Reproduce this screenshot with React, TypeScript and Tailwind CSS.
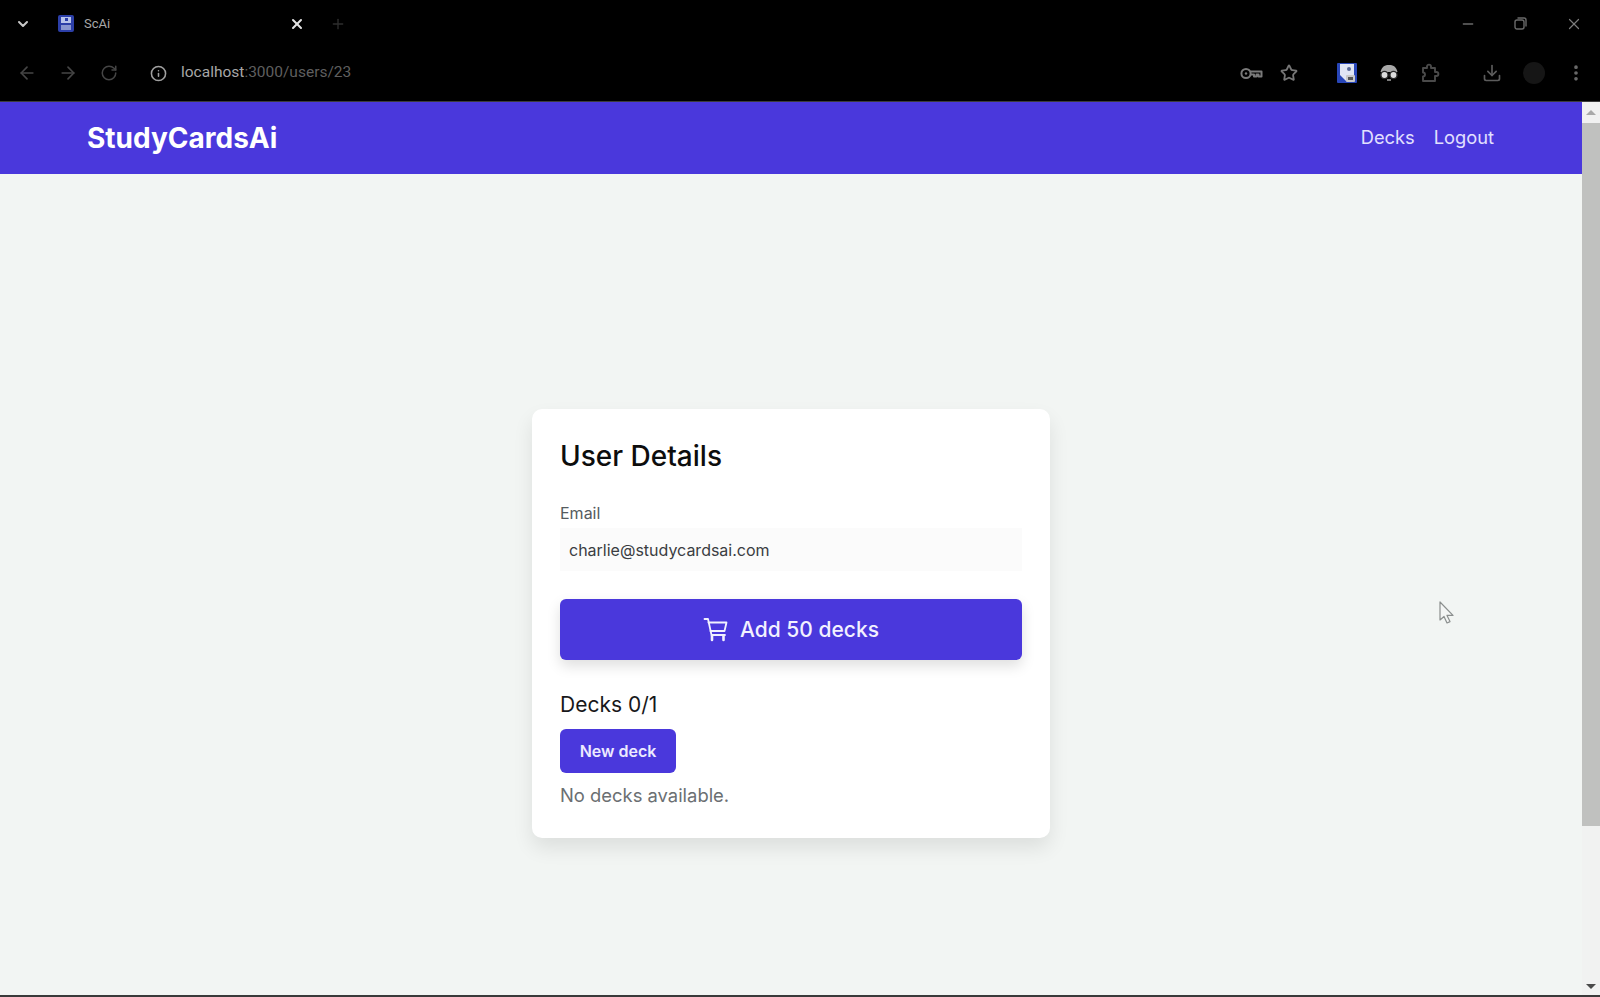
import {
  ArrowLeft,
  ArrowRight,
  ChevronDown,
  Download,
  EllipsisVertical,
  Info,
  Minus,
  Plus,
  RotateCw,
  Star,
  X,
} from "lucide-react"

const KeyIcon = () => (
  <svg width="23" height="13" viewBox="0 0 23 13" fill="none" stroke="#7a7a7a" strokeWidth="2">
    <circle cx="6" cy="6.5" r="4.6" />
    <circle cx="6" cy="6.5" r="1.2" fill="#7a7a7a" stroke="none" />
    <path d="M10.5 4.5h11v5h-3v-2h-2v2h-2.5v-2h-3.5" strokeLinejoin="round" />
  </svg>
)

const PuzzleIcon = () => (
  <svg width="20" height="20" viewBox="0 0 20 20" fill="none" stroke="#4a4a4a" strokeWidth="1.9" strokeLinejoin="round">
    <path d="M3 5h4V3.6a2 2 0 0 1 4 0V5h4v4h1.4a2 2 0 0 1 0 4H15v5H3v-4.5a2 2 0 0 0 0-4z" />
  </svg>
)

const RestoreIcon = () => (
  <svg width="13" height="13" viewBox="0 0 13 13" fill="none" stroke="#6a6a6a" strokeWidth="1.4">
    <rect x="1" y="3" width="9" height="9" rx="2" />
    <path d="M3.5 1h6.5a2 2 0 0 1 2 2v6.5" />
  </svg>
)

const Favicon = () => (
  <svg width="16" height="17" viewBox="0 0 16 17">
    <rect width="16" height="17" rx="2" fill="#2c3fa8" />
    <rect x="3" y="2" width="10" height="6" fill="#b9c4ea" />
    <rect x="7" y="3" width="3" height="3" fill="#2c3fa8" />
    <rect x="3" y="10" width="10" height="5" fill="#8a97d0" />
  </svg>
)

const BitwardenIcon = () => (
  <svg width="20" height="20" viewBox="0 0 20 20">
    <rect width="20" height="20" rx="1" fill="#2846b8" />
    <path d="M3 1h14v17H9L3 12z" fill="#e0e5f4" />
    <circle cx="12" cy="6" r="2" fill="#5a6a9a" />
    <rect x="9" y="12" width="9" height="7" rx="1" fill="#c9c9c9" />
    <rect x="11" y="14" width="5" height="3" fill="#555" />
  </svg>
)

const IncognitoIcon = () => (
  <svg width="20" height="18" viewBox="0 0 20 18">
    <path d="M1.500 8C3 2 6 1 10 1s7 1 8.500 7z" fill="#a8a8a8" />
    <circle cx="5.500" cy="11" r="3.600" fill="#dcdcdc" stroke="#2a2a2a" strokeWidth="1.400" />
    <circle cx="14.500" cy="11" r="3.600" fill="#dcdcdc" stroke="#2a2a2a" strokeWidth="1.400" />
    <path d="M8 16h4" stroke="#9a9a9a" strokeWidth="1.600" />
  </svg>
)

const CartIcon = () => (
  <svg width="26" height="26" viewBox="0 0 26 26" fill="none" stroke="currentColor" strokeWidth="1.800" strokeLinejoin="round" strokeLinecap="round">
    <path d="M1.500 2h3.500l3.500 16h13.500" />
    <path d="M5.500 5.500h18l-2 8.500H7.500" />
    <path d="M9 18.500v4.500M20.500 18.500v4.500" strokeWidth="2.600" />
  </svg>
)

const CursorIcon = () => (
  <svg width="18" height="24" viewBox="0 0 18 24" fill="#f4f6f5" stroke="#8b8f8e" strokeWidth="1.200" strokeLinejoin="round">
    <path d="M1 1v18l4-3.500 3 6.500 3-1.400-3-6.200 6 0z" />
  </svg>
)

const Slot = ({ className, children }: { className?: string; children: React.ReactNode }) => (
  <div className={`flex h-full items-center justify-center ${className ?? "w-[41px]"}`}>{children}</div>
)

const BrowserChrome = () => (
  <header className="h-[102px] shrink-0 border-b border-[#3c3c3c] bg-black">
    <div className="flex h-[47px] items-center">
      <div className="flex w-[46px] justify-center">
        <ChevronDown className="h-4 w-4 text-[#c8c8c8]" strokeWidth={3} />
      </div>
      <div className="ml-[12px]">
        <Favicon />
      </div>
      <span className="ml-[10px] text-[13px] text-[#a8a8a8] [font-family:Roboto,sans-serif]">ScAi</span>
      <div className="ml-[179px] flex w-[16px] justify-center">
        <X className="h-4 w-4 text-[#e4e4e4]" strokeWidth={3} />
      </div>
      <div className="ml-[25px] flex w-[16px] justify-center">
        <Plus className="h-4 w-4 text-[#2e2e2e]" strokeWidth={2} />
      </div>
      <div className="ml-auto flex items-center">
        <div className="flex w-[53px] justify-center">
          <Minus className="h-4 w-4 text-[#6a6a6a]" />
        </div>
        <div className="flex w-[53px] justify-center">
          <RestoreIcon />
        </div>
        <div className="flex w-[53px] justify-center">
          <X className="h-[18px] w-[18px] text-[#7c7c7c]" strokeWidth={1.6} />
        </div>
      </div>
    </div>
    <div className="flex h-[52px] items-center pl-[6px] pr-[4px]">
      <Slot>
        <ArrowLeft className="h-5 w-5 text-[#454545]" />
      </Slot>
      <Slot>
        <ArrowRight className="h-5 w-5 text-[#454545]" />
      </Slot>
      <Slot>
        <RotateCw className="h-[18px] w-[18px] text-[#454545]" />
      </Slot>
      <Info className="ml-[21px] h-[17px] w-[17px] text-[#a0a0a0]" strokeWidth={2.2} />
      <div className="ml-[14px] text-[15.5px] [font-family:Roboto,sans-serif]">
        <span className="text-[#a8a8a8]">localhost</span>
        <span className="text-[#5f5f5f]">:3000/users/23</span>
      </div>
      <div className="ml-auto flex h-full items-center">
        <div className="mr-[8px] flex w-[30px] justify-center">
          <KeyIcon />
        </div>
        <div className="mr-[22px] flex w-[30px] justify-center">
          <Star className="h-[18px] w-[18px] text-[#767676]" strokeWidth={2.4} />
        </div>
        <Slot className="w-[42px]">
          <BitwardenIcon />
        </Slot>
        <Slot className="w-[41px]">
          <IncognitoIcon />
        </Slot>
        <Slot className="w-[41px]">
          <PuzzleIcon />
        </Slot>
        <div className="w-[21px]" />
        <Slot className="w-[42px]">
          <Download className="h-5 w-5 text-[#5c5c5c]" strokeWidth={2} />
        </Slot>
        <Slot className="w-[42px]">
          <div className="h-[22px] w-[22px] rounded-full bg-[#161616]" />
        </Slot>
        <Slot className="w-[41px]">
          <EllipsisVertical className="h-5 w-5 text-[#6a6a6a]" strokeWidth={2.4} />
        </Slot>
      </div>
    </div>
  </header>
)

const Scrollbar = () => (
  <div className="flex w-[18px] shrink-0 flex-col bg-[#f1f2f1]">
    <div className="flex h-[21px] items-center justify-center bg-[#f1f1f1]">
      <div className="h-0 w-0 border-x-[5px] border-b-[5px] border-x-transparent border-b-[#a9a9a9]" />
    </div>
    <div className="h-[703px] bg-[#c0c1bf]" />
    <div className="flex-1" />
    <div className="flex h-[17px] items-center justify-center">
      <div className="h-0 w-0 border-x-[5px] border-t-[5px] border-x-transparent border-t-[#4a4a4a]" />
    </div>
  </div>
)

export default function App() {
  return (
    <div className="relative flex h-[997px] w-full flex-col overflow-hidden bg-[#f2f5f3] [font-family:Inter,sans-serif]">
      <BrowserChrome />
      <div className="flex min-h-0 flex-1">
        <div className="flex min-w-0 flex-1 flex-col">
          <nav className="flex h-[72px] shrink-0 items-center justify-between bg-[#4a38dc] pl-[87px] pr-[88px] text-white">
            <span className="text-[28px] font-bold leading-none">StudyCardsAi</span>
            <div className="flex items-center gap-[19px] text-[18.3px] text-[#e2e0ff]">
              <a>Decks</a>
              <a>Logout</a>
            </div>
          </nav>
          <main className="flex flex-1 justify-center pt-[235px]">
            <div className="h-[429px] w-[518px] rounded-[10px] bg-white px-[28px] pt-[26px] shadow-[0_10px_20px_rgba(0,0,0,0.09)]">
              <h1 className="text-[28px] font-medium leading-[42px] text-[#0d0d0d]">User Details</h1>
              <label className="mt-[26px] block text-[16px] leading-[20px] text-[#555b60]">Email</label>
              <div className="mt-[5px] flex h-[43px] items-center bg-[#fbfbfb] px-[9px] text-[16px] text-[#3a3d42]">
                charlie@studycardsai.com
              </div>
              <button className="mt-[28px] flex h-[61px] w-full items-center justify-center gap-[11px] rounded-[6px] bg-[#4a38dc] text-[21px] font-medium text-[#f2f1ff] shadow-[0_6px_14px_rgba(0,0,0,0.13)]">
                <CartIcon />
                Add 50 decks
              </button>
              <h2 className="mt-[31px] text-[21px] leading-[28px] text-[#17181a]">Decks 0/1</h2>
              <button className="mt-[10px] flex h-[44px] w-[116px] items-center justify-center rounded-[6px] bg-[#4a38dc] text-[16px] font-semibold text-[#eceaff]">
                New deck
              </button>
              <p className="mt-[10px] text-[18.4px] leading-[24px] text-[#6b6f72]">No decks available.</p>
            </div>
          </main>
        </div>
        <Scrollbar />
      </div>
      <div className="h-[2px] shrink-0 bg-[#3a3a3a]" />
      <div className="absolute left-[1439px] top-[601px]">
        <CursorIcon />
      </div>
    </div>
  )
}
